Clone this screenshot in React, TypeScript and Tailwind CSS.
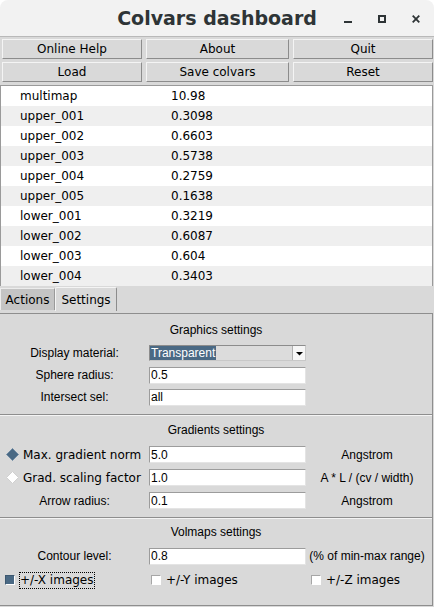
import React from 'react';

const dv = "font-['DejaVu_Sans',sans-serif]";
const lib = "font-['Liberation_Sans',Arial,sans-serif]";

const values: [string, string][] = [
  ['multimap', '10.98'],
  ['upper_001', '0.3098'],
  ['upper_002', '0.6603'],
  ['upper_003', '0.5738'],
  ['upper_004', '0.2759'],
  ['upper_005', '0.1638'],
  ['lower_001', '0.3219'],
  ['lower_002', '0.6087'],
  ['lower_003', '0.604'],
  ['lower_004', '0.3403'],
];

const Btn = ({ label }: { label: string }) => (
  <div
    className={`h-[20px] flex items-center justify-center bg-[#d9d9d9] border border-t-[#f4f4f4] border-l-[#f4f4f4] border-r-[#8c8c8c] border-b-[#8c8c8c] text-[12px] text-black ${dv}`}
  >
    {label}
  </div>
);

const Entry = ({ value }: { value: string }) => (
  <div
    className={`h-[17px] w-[157px] bg-white border border-t-[#9c9c9c] border-l-[#9c9c9c] border-r-[#e4e4e4] border-b-[#e4e4e4] pl-[1px] flex items-center text-[12px] leading-none text-black ${lib}`}
  >
    {value}
  </div>
);

const Radio = ({ on }: { on: boolean }) => (
  <svg width="13" height="13" viewBox="0 0 13 13" className="shrink-0">
    <path
      d="M6.5 0.5 L12.5 6.5 L6.5 12.5 L0.5 6.5 Z"
      fill={on ? '#4a6984' : '#ffffff'}
      stroke={on ? '#6f8aa3' : '#d0d0d0'}
      strokeWidth="1"
    />
  </svg>
);

const Check = ({ on }: { on: boolean }) => (
  <span
    className={`w-[10px] h-[10px] shrink-0 border ${
      on
        ? 'bg-[#4a6984] border-t-[#3d5870] border-l-[#3d5870] border-r-white border-b-white'
        : 'bg-white border-t-[#a6a6a6] border-l-[#a6a6a6] border-r-white border-b-white'
    }`}
  />
);

const Label = ({ children }: { children: React.ReactNode }) => (
  <div className={`flex items-center justify-center text-[12px] text-black ${lib}`}>{children}</div>
);

const Unit = ({ children }: { children: React.ReactNode }) => (
  <div className={`flex items-center justify-center text-[12px] text-black ${lib}`}>{children}</div>
);

const Separator = () => (
  <div>
    <div className="h-px bg-[#8e8e8e]" />
    <div className="h-px bg-[#f4f4f4]" />
  </div>
);

export default function App() {
  return (
    <div className="w-[434px] h-[607px] bg-white overflow-hidden">
      {/* title bar */}
      <div className="h-[37px] bg-[#f2f2f2] border-b border-[#b9b9b9] rounded-t-[8px] relative flex items-center justify-center">
        <span className={`text-[19px] font-bold text-[#2e3436] ${dv}`}>Colvars dashboard</span>
        <div className="absolute right-[14px] top-[14px] flex items-center gap-[26px]">
          <svg width="8" height="9" viewBox="0 0 8 9">
            <rect x="0" y="7" width="8" height="2" fill="#2e3436" />
          </svg>
          <svg width="8" height="8" viewBox="0 0 8 8">
            <rect x="1" y="1" width="6" height="6" fill="none" stroke="#2e3436" strokeWidth="2" />
          </svg>
          <svg width="8" height="8" viewBox="0 0 8 8">
            <path d="M0.7 0.7 L7.3 7.3 M7.3 0.7 L0.7 7.3" stroke="#2e3436" strokeWidth="1.8" />
          </svg>
        </div>
      </div>

      <div className="bg-[#d9d9d9] h-[570px]">
        {/* buttons */}
        <div className="grid grid-cols-[140px_143px_140px] gap-x-[4px] gap-y-[3px] pt-[2px] pb-[3px] px-[2px]">
          <Btn label="Online Help" />
          <Btn label="About" />
          <Btn label="Quit" />
          <Btn label="Load" />
          <Btn label="Save colvars" />
          <Btn label="Reset" />
        </div>

        {/* colvar list */}
        <div className="bg-white border-t border-l border-r border-[#9a9a9a] mr-[1px]">
          {values.map(([name, val], i) => (
            <div
              key={name}
              className={`h-[20px] flex items-center text-[12px] text-black ${dv} ${
                i % 2 === 1 ? 'bg-[#efefef]' : 'bg-white'
              }`}
            >
              <span className="w-[149px] pl-[19px]">{name}</span>
              <span className="pl-[21px]">{val}</span>
            </div>
          ))}
        </div>

        {/* tabs */}
        <div className={`h-[27px] flex items-start text-[12px] text-black ${dv}`}>
          <div className="mt-[2px] h-[22px] w-[55px] flex items-center justify-center bg-[#c4c4c4] border-l border-t border-r border-l-[#ececec] border-t-[#ececec] border-r-[#9a9a9a]">
            Actions
          </div>
          <div className="mt-[1px] h-[24px] w-[62px] flex items-center justify-center bg-[#d9d9d9] border-l border-t border-r border-l-[#f4f4f4] border-t-[#f4f4f4] border-r-[#8c8c8c] rounded-t-[2px]">
            Settings
          </div>
        </div>

        {/* settings panel */}
        <div className="border-t border-b border-r border-[#8e8e8e] mr-[1px]">
          {/* graphics */}
          <div className="h-[100px] pt-[8px]">
            <div className={`h-[16px] flex items-center justify-center text-[12px] text-black ${lib}`}>
              Graphics settings
            </div>
            <div className="mt-[4px] grid grid-cols-[149px_157px_122px] auto-rows-[22px]">
              <Label>Display material:</Label>
              <div className="flex items-center">
                <div className="h-[16px] w-[157px] flex items-stretch bg-[#dcdcdc] border border-t-[#8c8c8c] border-l-[#8c8c8c] border-r-[#c8c8c8] border-b-[#c8c8c8]">
                  <div className="flex-1 flex items-center">
                    <span className={`bg-[#4a6984] text-white text-[12px] leading-[14px] h-[14px] pl-[1px] pr-[1px] ${lib}`}>
                      Transparent
                    </span>
                  </div>
                  <div className="w-[13px] bg-[#f6f6f6] border-l border-[#b0b0b0] flex items-center justify-center">
                    <svg width="7" height="5" viewBox="0 0 7 5">
                      <path d="M0 1 L7 1 L3.5 4.5 Z" fill="#000" />
                    </svg>
                  </div>
                </div>
              </div>
              <div />
              <Label>Sphere radius:</Label>
              <div className="flex items-center">
                <Entry value="0.5" />
              </div>
              <div />
              <Label>Intersect sel:</Label>
              <div className="flex items-center">
                <Entry value="all" />
              </div>
              <div />
            </div>
          </div>

          <Separator />

          {/* gradients */}
          <div className="h-[101px] pt-[6px]">
            <div className={`h-[16px] flex items-center justify-center text-[12px] text-black ${lib}`}>
              Gradients settings
            </div>
            <div className="mt-[5px] grid grid-cols-[149px_157px_122px] auto-rows-[23px]">
              <div className={`flex items-center gap-[4px] pl-[6px] text-[12px] text-black ${dv}`}>
                <Radio on />
                <span>Max. gradient norm</span>
              </div>
              <div className="flex items-center">
                <Entry value="5.0" />
              </div>
              <Unit>Angstrom</Unit>
              <div className={`flex items-center gap-[4px] pl-[6px] text-[12px] text-black ${dv}`}>
                <Radio on={false} />
                <span>Grad. scaling factor</span>
              </div>
              <div className="flex items-center">
                <Entry value="1.0" />
              </div>
              <Unit>A * L / (cv / width)</Unit>
              <Label>Arrow radius:</Label>
              <div className="flex items-center">
                <Entry value="0.1" />
              </div>
              <Unit>Angstrom</Unit>
            </div>
          </div>

          <Separator />

          {/* volmaps */}
          <div className="h-[86px] pt-[5px]">
            <div className={`h-[16px] flex items-center justify-center text-[12px] text-black ${lib}`}>
              Volmaps settings
            </div>
            <div className="mt-[4px] grid grid-cols-[149px_157px_122px] auto-rows-[24px]">
              <Label>Contour level:</Label>
              <div className="flex items-center">
                <Entry value="0.8" />
              </div>
              <Unit>(% of min-max range)</Unit>
              <div className={`flex items-center gap-[4px] pl-[5px] text-[12px] text-black ${dv}`}>
                <Check on />
                <span className="border border-dotted border-black leading-[15px]">+/-X images</span>
              </div>
              <div className={`flex items-center gap-[5px] pl-[2px] text-[12px] text-black ${dv}`}>
                <Check on={false} />
                <span>+/-Y images</span>
              </div>
              <div className={`flex items-center gap-[5px] pl-[5px] text-[12px] text-black ${dv}`}>
                <Check on={false} />
                <span>+/-Z images</span>
              </div>
            </div>
          </div>
        </div>
      </div>
    </div>
  );
}
